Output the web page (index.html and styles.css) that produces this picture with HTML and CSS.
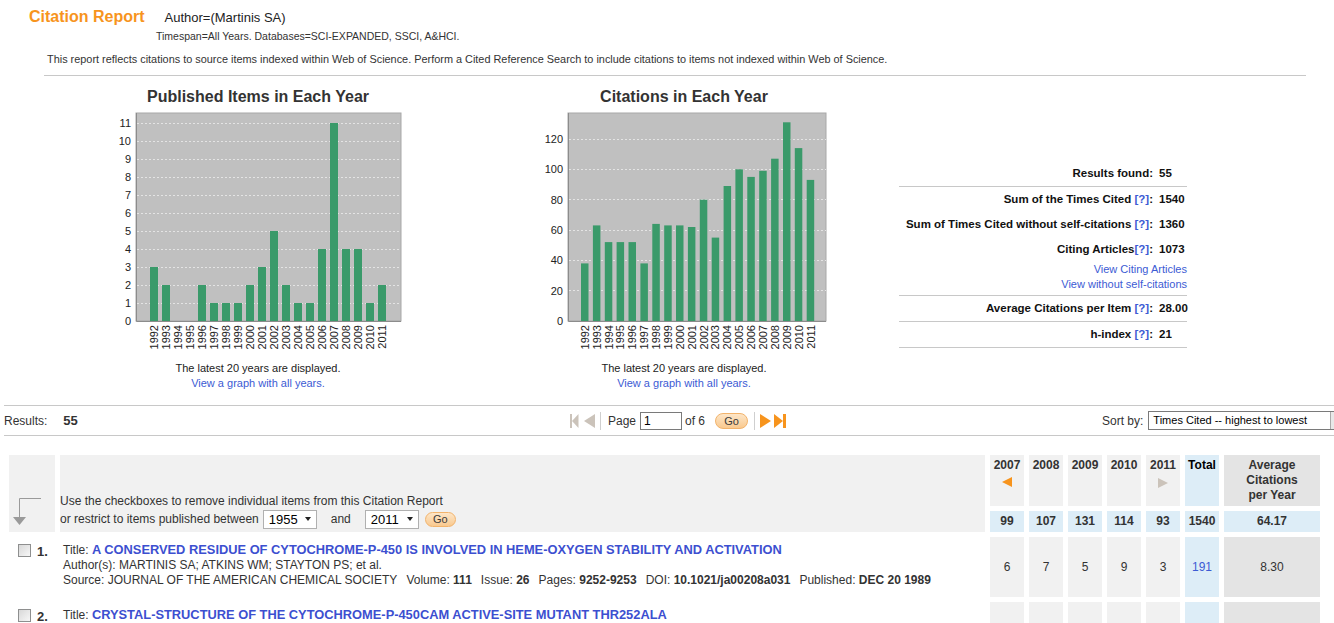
FILE: index.html
```html
<!DOCTYPE html>
<html lang="en">
<head>
<meta charset="utf-8">
<title>Citation Report</title>
<link rel="stylesheet" href="styles.css">
</head>
<body>
<div class="page">
  <header class="top">
    <div class="title-row">
      <h1 class="report-title">Citation Report</h1>
      <span class="query">Author=(Martinis SA)</span>
    </div>
    <div class="timespan">Timespan=All Years. Databases=SCI-EXPANDED, SSCI, A&amp;HCI.</div>
    <p class="disclaimer">This report reflects citations to source items indexed within Web of Science. Perform a Cited Reference Search to include citations to items not indexed within Web of Science.</p>
    <div class="rule"></div>
  </header>

  <section class="charts">
    <div class="chart">
      <h2 class="chart-title">Published Items in Each Year</h2>
      <svg class="chart-svg" width="304" height="253" viewBox="0 0 304 253">
        <rect x="30" y="5" width="265" height="208" fill="#c0c0c0" stroke="#a8a8a8"/>
        <g stroke="#e4e4e4" stroke-dasharray="2 2">
          <line x1="31" x2="295" y1="195.5" y2="195.5"/>
          <line x1="31" x2="295" y1="177.5" y2="177.5"/>
          <line x1="31" x2="295" y1="159.5" y2="159.5"/>
          <line x1="31" x2="295" y1="141.5" y2="141.5"/>
          <line x1="31" x2="295" y1="123.5" y2="123.5"/>
          <line x1="31" x2="295" y1="105.5" y2="105.5"/>
          <line x1="31" x2="295" y1="87.5" y2="87.5"/>
          <line x1="31" x2="295" y1="69.5" y2="69.5"/>
          <line x1="31" x2="295" y1="51.5" y2="51.5"/>
          <line x1="31" x2="295" y1="33.5" y2="33.5"/>
          <line x1="31" x2="295" y1="15.5" y2="15.5"/>
        </g>
        <g fill="#3a9a6a">
          <rect x="44" y="159" width="8" height="54"/>
          <rect x="56" y="177" width="8" height="36"/>
          <rect x="92" y="177" width="8" height="36"/>
          <rect x="104" y="195" width="8" height="18"/>
          <rect x="116" y="195" width="8" height="18"/>
          <rect x="128" y="195" width="8" height="18"/>
          <rect x="140" y="177" width="8" height="36"/>
          <rect x="152" y="159" width="8" height="54"/>
          <rect x="164" y="123" width="8" height="90"/>
          <rect x="176" y="177" width="8" height="36"/>
          <rect x="188" y="195" width="8" height="18"/>
          <rect x="200" y="195" width="8" height="18"/>
          <rect x="212" y="141" width="8" height="72"/>
          <rect x="224" y="15" width="8" height="198"/>
          <rect x="236" y="141" width="8" height="72"/>
          <rect x="248" y="141" width="8" height="72"/>
          <rect x="260" y="195" width="8" height="18"/>
          <rect x="272" y="177" width="8" height="36"/>
        </g>
        <path d="M30.5 5 V213.5 H295" stroke="#8c8c8c" fill="none"/>
        <g class="axis-label" text-anchor="end">
          <text x="25" y="217">0</text>
          <text x="25" y="199">1</text>
          <text x="25" y="181">2</text>
          <text x="25" y="163">3</text>
          <text x="25" y="145">4</text>
          <text x="25" y="127">5</text>
          <text x="25" y="109">6</text>
          <text x="25" y="91">7</text>
          <text x="25" y="73">8</text>
          <text x="25" y="55">9</text>
          <text x="25" y="37">10</text>
          <text x="25" y="19">11</text>
        </g>
        <g class="axis-label" text-anchor="end">
          <text transform="translate(52 217) rotate(-90)">1992</text>
          <text transform="translate(64 217) rotate(-90)">1993</text>
          <text transform="translate(76 217) rotate(-90)">1994</text>
          <text transform="translate(88 217) rotate(-90)">1995</text>
          <text transform="translate(100 217) rotate(-90)">1996</text>
          <text transform="translate(112 217) rotate(-90)">1997</text>
          <text transform="translate(124 217) rotate(-90)">1998</text>
          <text transform="translate(136 217) rotate(-90)">1999</text>
          <text transform="translate(148 217) rotate(-90)">2000</text>
          <text transform="translate(160 217) rotate(-90)">2001</text>
          <text transform="translate(172 217) rotate(-90)">2002</text>
          <text transform="translate(184 217) rotate(-90)">2003</text>
          <text transform="translate(196 217) rotate(-90)">2004</text>
          <text transform="translate(208 217) rotate(-90)">2005</text>
          <text transform="translate(220 217) rotate(-90)">2006</text>
          <text transform="translate(232 217) rotate(-90)">2007</text>
          <text transform="translate(244 217) rotate(-90)">2008</text>
          <text transform="translate(256 217) rotate(-90)">2009</text>
          <text transform="translate(268 217) rotate(-90)">2010</text>
          <text transform="translate(280 217) rotate(-90)">2011</text>
        </g>
      </svg>
      <div class="chart-note">The latest 20 years are displayed.</div>
      <a class="chart-link" href="#">View a graph with all years.</a>
    </div>

    <div class="chart">
      <h2 class="chart-title">Citations in Each Year</h2>
      <svg class="chart-svg" width="304" height="253" viewBox="0 0 304 253">
        <rect x="36" y="5" width="258" height="208" fill="#c0c0c0" stroke="#a8a8a8"/>
        <g stroke="#e4e4e4" stroke-dasharray="2 2">
          <line x1="37" x2="294" y1="182.5" y2="182.5"/>
          <line x1="37" x2="294" y1="152.5" y2="152.5"/>
          <line x1="37" x2="294" y1="122.5" y2="122.5"/>
          <line x1="37" x2="294" y1="91.5" y2="91.5"/>
          <line x1="37" x2="294" y1="61.5" y2="61.5"/>
          <line x1="37" x2="294" y1="31.5" y2="31.5"/>
        </g>
        <g fill="#3a9a6a">
          <rect x="49" y="155.4" width="7.5" height="57.6"/>
          <rect x="60.9" y="117.4" width="7.5" height="95.6"/>
          <rect x="72.8" y="134.1" width="7.5" height="78.9"/>
          <rect x="84.6" y="134.1" width="7.5" height="78.9"/>
          <rect x="96.5" y="134.1" width="7.5" height="78.9"/>
          <rect x="108.4" y="155.4" width="7.5" height="57.6"/>
          <rect x="120.3" y="115.9" width="7.5" height="97.1"/>
          <rect x="132.2" y="117.4" width="7.5" height="95.6"/>
          <rect x="144" y="117.4" width="7.5" height="95.6"/>
          <rect x="155.9" y="119" width="7.5" height="94"/>
          <rect x="167.8" y="91.7" width="7.5" height="121.3"/>
          <rect x="179.7" y="129.6" width="7.5" height="83.4"/>
          <rect x="191.6" y="78" width="7.5" height="135"/>
          <rect x="203.4" y="61.3" width="7.5" height="151.7"/>
          <rect x="215.3" y="68.9" width="7.5" height="144.1"/>
          <rect x="227.2" y="62.8" width="7.5" height="150.2"/>
          <rect x="239.1" y="50.7" width="7.5" height="162.3"/>
          <rect x="251" y="14.3" width="7.5" height="198.7"/>
          <rect x="262.8" y="40.1" width="7.5" height="172.9"/>
          <rect x="274.7" y="71.9" width="7.5" height="141.1"/>
        </g>
        <path d="M36.5 5 V213.5 H294" stroke="#8c8c8c" fill="none"/>
        <g class="axis-label" text-anchor="end">
          <text x="31" y="217">0</text>
          <text x="31" y="186.7">20</text>
          <text x="31" y="156.3">40</text>
          <text x="31" y="126">60</text>
          <text x="31" y="95.7">80</text>
          <text x="31" y="65.3">100</text>
          <text x="31" y="35">120</text>
        </g>
        <g class="axis-label" text-anchor="end">
          <text transform="translate(56.8 217) rotate(-90)">1992</text>
          <text transform="translate(68.6 217) rotate(-90)">1993</text>
          <text transform="translate(80.5 217) rotate(-90)">1994</text>
          <text transform="translate(92.4 217) rotate(-90)">1995</text>
          <text transform="translate(104.3 217) rotate(-90)">1996</text>
          <text transform="translate(116.2 217) rotate(-90)">1997</text>
          <text transform="translate(128 217) rotate(-90)">1998</text>
          <text transform="translate(139.9 217) rotate(-90)">1999</text>
          <text transform="translate(151.8 217) rotate(-90)">2000</text>
          <text transform="translate(163.7 217) rotate(-90)">2001</text>
          <text transform="translate(175.6 217) rotate(-90)">2002</text>
          <text transform="translate(187.4 217) rotate(-90)">2003</text>
          <text transform="translate(199.3 217) rotate(-90)">2004</text>
          <text transform="translate(211.2 217) rotate(-90)">2005</text>
          <text transform="translate(223.1 217) rotate(-90)">2006</text>
          <text transform="translate(235 217) rotate(-90)">2007</text>
          <text transform="translate(246.8 217) rotate(-90)">2008</text>
          <text transform="translate(258.7 217) rotate(-90)">2009</text>
          <text transform="translate(270.6 217) rotate(-90)">2010</text>
          <text transform="translate(282.5 217) rotate(-90)">2011</text>
        </g>
      </svg>
      <div class="chart-note">The latest 20 years are displayed.</div>
      <a class="chart-link" href="#">View a graph with all years.</a>
    </div>

    <div class="stats">
      <div class="stat-group">
        <div class="stat-row"><span class="stat-label">Results found:</span><span class="stat-value">55</span></div>
      </div>
      <div class="stat-group">
        <div class="stat-row"><span class="stat-label">Sum of the Times Cited <a class="help" href="#">[?]</a>:</span><span class="stat-value">1540</span></div>
        <div class="stat-row"><span class="stat-label">Sum of Times Cited without self-citations <a class="help" href="#">[?]</a>:</span><span class="stat-value">1360</span></div>
        <div class="stat-row"><span class="stat-label">Citing Articles<a class="help" href="#">[?]</a>:</span><span class="stat-value">1073</span></div>
        <div class="stat-links">
          <a href="#">View Citing Articles</a>
          <a href="#">View without self-citations</a>
        </div>
      </div>
      <div class="stat-group">
        <div class="stat-row"><span class="stat-label">Average Citations per Item <a class="help" href="#">[?]</a>:</span><span class="stat-value">28.00</span></div>
      </div>
      <div class="stat-group">
        <div class="stat-row"><span class="stat-label">h-index <a class="help" href="#">[?]</a>:</span><span class="stat-value">21</span></div>
      </div>
    </div>
  </section>

  <nav class="results-bar">
    <div class="results-count">Results:<b class="results-num">55</b></div>
    <div class="pager">
      <svg class="pager-icon" width="26" height="14" viewBox="0 0 26 14">
        <g fill="#cbc3ba">
          <rect x="0" y="0" width="2" height="14"/>
          <polygon points="2,7 8.5,0 8.5,14"/>
          <polygon points="14,7 25,0 25,14"/>
        </g>
      </svg>
      <span class="pager-sep"></span>
      <span class="pager-text">Page</span>
      <span class="page-input">1</span>
      <span class="pager-text of">of 6</span>
      <span class="go-btn">Go</span>
      <span class="pager-sep sep2"></span>
      <svg class="pager-icon next" width="27" height="14" viewBox="0 0 27 14">
        <g fill="#f7941d">
          <polygon points="0,0 11,7 0,14"/>
          <polygon points="14,0 23,7 14,14"/>
          <rect x="23" y="0" width="3" height="14"/>
        </g>
      </svg>
    </div>
    <div class="sort">
      <span class="sort-label">Sort by:</span>
      <span class="sort-select">Times Cited -- highest to lowest<span class="sort-btn"></span></span>
    </div>
  </nav>

  <section class="records">
    <div class="arrow-cell">
      <svg width="28" height="29" viewBox="0 0 28 29">
        <path d="M6.5 21 V1.5 H28" stroke="#9a9a9a" fill="none"/>
        <polygon points="0,20 13,20 6.5,28" fill="#9a9a9a"/>
      </svg>
    </div>
    <div class="intro-cell">
      <div>Use the checkboxes to remove individual items from this Citation Report</div>
      <div class="intro-line">or restrict to items published between
        <span class="fake-select">1955<span class="caret"></span></span>
        <span class="and">and</span>
        <span class="fake-select">2011<span class="caret"></span></span>
        <span class="go-btn small">Go</span>
      </div>
    </div>
    <div class="hcell year">2007<span class="tri-left"></span></div>
    <div class="hcell year">2008</div>
    <div class="hcell year">2009</div>
    <div class="hcell year">2010</div>
    <div class="hcell year">2011<span class="tri-right"></span></div>
    <div class="hcell total">Total</div>
    <div class="hcell avg">Average<br>Citations<br>per Year</div>

    <div class="sum">99</div>
    <div class="sum">107</div>
    <div class="sum">131</div>
    <div class="sum">114</div>
    <div class="sum">93</div>
    <div class="sum">1540</div>
    <div class="sum">64.17</div>

    <div class="rec">
      <span class="checkbox"></span>
      <b class="rec-num">1.</b>
      <div class="rec-body">
        <div>Title: <a class="rec-title" href="#">A CONSERVED RESIDUE OF CYTOCHROME-P-450 IS INVOLVED IN HEME-OXYGEN STABILITY AND ACTIVATION</a></div>
        <div>Author(s): MARTINIS SA; ATKINS WM; STAYTON PS; et al.</div>
        <div>Source: JOURNAL OF THE AMERICAN CHEMICAL SOCIETY <span class="fld">Volume: <b>111</b></span><span class="fld">Issue: <b>26</b></span><span class="fld">Pages: <b>9252-9253</b></span><span class="fld">DOI: <b>10.1021/ja00208a031</b></span><span class="fld">Published: <b>DEC 20 1989</b></span></div>
      </div>
    </div>
    <div class="vcell">6</div>
    <div class="vcell">7</div>
    <div class="vcell">5</div>
    <div class="vcell">9</div>
    <div class="vcell">3</div>
    <div class="vcell total"><a href="#">191</a></div>
    <div class="vcell avg">8.30</div>

    <div class="rec">
      <span class="checkbox"></span>
      <b class="rec-num">2.</b>
      <div class="rec-body">
        <div>Title: <a class="rec-title" href="#">CRYSTAL-STRUCTURE OF THE CYTOCHROME-P-450CAM ACTIVE-SITE MUTANT THR252ALA</a></div>
      </div>
    </div>
    <div class="vcell"></div>
    <div class="vcell"></div>
    <div class="vcell"></div>
    <div class="vcell"></div>
    <div class="vcell"></div>
    <div class="vcell total"></div>
    <div class="vcell avg"></div>
  </section>
</div>
</body>
</html>
```

FILE: styles.css
```css
* { box-sizing: border-box; }

html, body {
  margin: 0;
  background: #fff;
  overflow: hidden;
}

body {
  font-family: "Liberation Sans", Arial, sans-serif;
  color: #222;
}

a { color: #3c5bd4; text-decoration: none; }

/* ---------- header ---------- */
.top { padding: 7px 0 0 29px; }

.title-row {
  display: flex;
  align-items: baseline;
  height: 20px;
}

.report-title {
  margin: 0;
  font-size: 16px;
  line-height: 20px;
  font-weight: bold;
  color: #f7941d;
}

.query {
  margin-left: 20px;
  font-size: 13px;
  color: #222;
}

.timespan {
  margin: 2px 0 0 127px;
  font-size: 10.5px;
  line-height: 14px;
  color: #333;
}

.disclaimer {
  margin: 9px 0 0 18px;
  font-size: 10.9px;
  line-height: 14px;
  color: #333;
}

.rule {
  margin: 9px 0 0 15px;
  width: 1262px;
  border-top: 1px solid #c8c8c8;
}

/* ---------- charts ---------- */
.charts {
  display: flex;
  align-items: flex-start;
  padding: 0 0 14px 106px;
}

.chart {
  width: 304px;
  margin-top: 11px;
  text-align: center;
}

.chart + .chart { margin-left: 122px; }

.chart-title {
  margin: 0;
  font-size: 16px;
  line-height: 20px;
  font-weight: bold;
  color: #333;
}

.chart-svg {
  display: block;
  margin-top: 1px;
}

.axis-label {
  font-family: "Liberation Sans", Arial, sans-serif;
  font-size: 11px;
  fill: #222;
}

.chart-note {
  font-size: 11px;
  line-height: 15px;
  color: #222;
}

.chart-link {
  display: block;
  font-size: 11px;
  line-height: 15px;
}

/* ---------- stats ---------- */
.stats {
  width: 288px;
  margin: 85px 0 0 63px;
  font-size: 11.5px;
  font-weight: bold;
  color: #111;
}

.stat-group { border-bottom: 1px solid #c8c8c8; }

.stat-row {
  display: grid;
  grid-template-columns: 1fr 28px;
  column-gap: 6px;
  line-height: 25px;
  white-space: nowrap;
}

.stat-label { text-align: right; }

.help { color: #3c5bd4; }

.stat-links {
  text-align: right;
  font-size: 11px;
  font-weight: normal;
  line-height: 15px;
  padding-bottom: 3px;
}

.stat-links a { display: block; }

/* ---------- results bar ---------- */
.results-bar {
  margin-left: 4px;
  height: 31px;
  border-top: 1px solid #c8c8c8;
  border-bottom: 1px solid #c8c8c8;
  display: grid;
  grid-template-columns: 566px 532px 1fr;
  align-items: center;
  font-size: 12px;
  color: #333;
  overflow: hidden;
  white-space: nowrap;
}

.results-num {
  margin-left: 16px;
  font-size: 13px;
  color: #333;
}

.pager {
  display: flex;
  align-items: center;
}

.pager-icon { display: block; }

.pager-sep {
  width: 1px;
  height: 18px;
  background: #cfcfcf;
  margin: 0 7px 0 4px;
}

.pager-sep.sep2 { margin: 0 5px 0 6px; }

.pager-text { color: #333; }

.page-input {
  width: 42px;
  height: 18px;
  margin: 0 3px 0 4px;
  border: 1px solid #7a7a7a;
  padding-left: 3px;
  line-height: 16px;
  font-size: 12px;
  color: #000;
}

.pager-text.of { margin-right: 10px; }

.go-btn {
  display: inline-flex;
  align-items: center;
  justify-content: center;
  width: 33px;
  height: 16px;
  border: 1px solid #f2b36b;
  border-radius: 8px;
  background: linear-gradient(#fde6c8, #f9c98f);
  font-size: 11px;
  color: #3a3a3a;
}

.sort {
  display: flex;
  align-items: center;
}

.sort-label { color: #333; }

.sort-select {
  position: relative;
  flex: none;
  width: 200px;
  height: 19px;
  margin-left: 5px;
  border: 1px solid #7a7a7a;
  padding-left: 4px;
  font-size: 11px;
  line-height: 17px;
  color: #000;
}

.sort-btn {
  position: absolute;
  top: 0;
  right: 0;
  width: 17px;
  height: 17px;
  background: #e8e8e8;
  border-left: 1px solid #aaa;
}

/* ---------- records ---------- */
.records {
  display: grid;
  grid-template-columns: 46px 925px repeat(6, 34px) 96px;
  grid-template-rows: 51px 21px 60px 60px;
  column-gap: 5px;
  row-gap: 5px;
  margin: 19px 0 0 9px;
  font-size: 12px;
  color: #333;
}

.arrow-cell {
  grid-row: 1 / 3;
  grid-column: 1;
  background: #f1f1f1;
  display: flex;
  align-items: flex-end;
  padding: 0 0 6px 4px;
}

.arrow-cell svg { display: block; }

.intro-cell {
  grid-row: 1 / 3;
  grid-column: 2;
  background: #f1f1f1;
  display: flex;
  flex-direction: column;
  justify-content: flex-end;
  padding: 0 0 3px 0;
  line-height: 15px;
}

.intro-line {
  display: flex;
  align-items: center;
  height: 20px;
  white-space: nowrap;
}

.fake-select {
  display: inline-flex;
  align-items: center;
  justify-content: space-between;
  width: 54px;
  height: 19px;
  margin-left: 4px;
  padding: 0 5px 0 5px;
  border: 1px solid #b0b0b0;
  background: #fff;
  font-size: 13px;
  color: #000;
}

.caret {
  width: 0;
  height: 0;
  border-top: 4px solid #222;
  border-left: 3.5px solid transparent;
  border-right: 3.5px solid transparent;
}

.and { margin: 0 10px 0 14px; }

.go-btn.small {
  width: 31px;
  height: 15px;
  margin-left: 6px;
}

.hcell {
  background: #f1f1f1;
  text-align: center;
  font-weight: bold;
  line-height: 15px;
  padding-top: 3px;
  display: flex;
  flex-direction: column;
  align-items: center;
}

.hcell.total { background: #ddedf7; color: #000; }
.hcell.avg { background: #e4e4e4; display: block; }

.tri-left {
  margin-top: 4px;
  width: 0;
  height: 0;
  border-top: 5px solid transparent;
  border-bottom: 5px solid transparent;
  border-right: 10px solid #f7941d;
}

.tri-right {
  margin-top: 5px;
  width: 0;
  height: 0;
  border-top: 5px solid transparent;
  border-bottom: 5px solid transparent;
  border-left: 10px solid #cbc3ba;
}

.sum {
  background: #ddedf7;
  text-align: center;
  font-weight: bold;
  line-height: 21px;
}

.rec {
  grid-column: 1 / 3;
  display: flex;
  align-items: flex-start;
  padding: 5px 0 0 9px;
  line-height: 15px;
  white-space: nowrap;
}

.checkbox {
  flex: none;
  width: 13px;
  height: 13px;
  margin-top: 2px;
  border: 1px solid #8e8f8f;
  background: linear-gradient(135deg, #d8d8d8, #f7f7f7);
}

.rec-num {
  width: 26px;
  margin-left: 6px;
  margin-top: 2px;
  font-size: 13px;
  color: #333;
}

.rec-title {
  font-size: 12.85px;
  font-weight: bold;
  color: #3c4fd0;
}

.fld { margin-left: 6px; }
.fld + .fld { margin-left: 9px; }

.vcell {
  background: #f1f1f1;
  display: flex;
  align-items: center;
  justify-content: center;
}

.vcell.total { background: #ddedf7; }
.vcell.avg { background: #e4e4e4; }
```
